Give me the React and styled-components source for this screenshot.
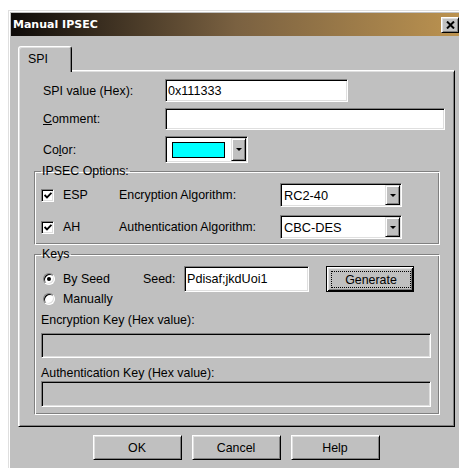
import styled, { createGlobalStyle } from "styled-components";

const GlobalStyle = createGlobalStyle`
  html, body {
    margin: 0;
    padding: 0;
    overflow: hidden;
    background: #fff;
  }
  body {
    font-family: "Liberation Sans", Arial, sans-serif;
    font-size: 12.4px;
    color: #000;
  }
  * {
    box-sizing: border-box;
  }
`;

const Desktop = styled.div`
  width: 459px;
  height: 468px;
  overflow: hidden;
  padding: 10px 0 0 8px;
`;

const Window = styled.div`
  width: 456px;
  height: 480px;
  background: #c0c0c0;
  border: 1px solid;
  border-color: #dfdfdf #000 #000 #dfdfdf;
  box-shadow: inset 1px 1px #fff, inset -1px -1px #808080;
  padding: 2px;
`;

const TitleBar = styled.div`
  height: 23px;
  display: flex;
  align-items: center;
  justify-content: space-between;
  padding: 0 2px;
  background: linear-gradient(90deg, #0e0b09 0%, #7a6141 50%, #bc9350 100%);
`;

const Title = styled.span`
  font-family: "DejaVu Sans", sans-serif;
  font-weight: bold;
  font-size: 11px;
  color: #fff;
`;

const CloseButton = styled.div`
  width: 18px;
  height: 16px;
  background: #c0c0c0;
  border: 1px solid;
  border-color: #fff #000 #000 #fff;
  box-shadow: inset 1px 1px #dfdfdf, inset -1px -1px #808080;
  display: flex;
  align-items: center;
  justify-content: center;
`;

const Body = styled.div`
  padding: 10px 0 0 7px;
`;

const TabStrip = styled.div`
  display: flex;
  height: 24px;
  position: relative;
  z-index: 1;
`;

const Tab = styled.div`
  width: 54px;
  height: 26px;
  padding: 5px 0 0 9px;
  line-height: 14px;
  background: #c0c0c0;
  border: 1px solid;
  border-bottom: none;
  border-color: #fff #000 transparent #fff;
  border-radius: 3px 3px 0 0;
  box-shadow: inset 1px 1px #dfdfdf, inset -1px 0 #808080;
`;

const Panel = styled.div`
  width: 437px;
  border: 1px solid;
  border-color: #fff #000 #000 #fff;
  box-shadow: inset 1px 1px #dfdfdf, inset -1px -1px #808080;
  padding: 8px 0 11px 15px;
`;

const FieldGrid = styled.div`
  display: grid;
  grid-template-columns: 122px auto;
  grid-template-rows: 23px 22px 27px;
  row-gap: 6px;
  align-items: center;
  justify-items: start;
  padding-left: 9px;
`;

const Label = styled.span`
  white-space: nowrap;
  line-height: 14px;
`;

const Sunken = styled.div`
  background: #fff;
  border: 1px solid;
  border-color: #808080 #fff #fff #808080;
  box-shadow: inset 1px 1px #000, inset -1px -1px #dfdfdf;
`;

const TextBox = styled(Sunken)`
  width: ${(p) => p.$w}px;
  height: ${(p) => p.$h}px;
  background: ${(p) => (p.$disabled ? "#c0c0c0" : "#fff")};
  padding: 0 3px 0 2px;
  display: flex;
  align-items: center;
  white-space: nowrap;
  overflow: hidden;
  font-size: 12.6px;
`;

const ColorCombo = styled(Sunken)`
  width: 83px;
  height: 27px;
  padding: 1px 1px 1px 6px;
  display: flex;
  align-items: center;
  justify-content: space-between;
`;

const Swatch = styled.div`
  width: 53px;
  height: 16px;
  background: ${(p) => p.$color};
  border: 1px solid #000;
`;

const DropButton = styled.div`
  width: 15px;
  align-self: stretch;
  background: #c0c0c0;
  border: 1px solid;
  border-color: #dfdfdf #000 #000 #dfdfdf;
  box-shadow: inset 1px 1px #fff, inset -1px -1px #808080;
  display: flex;
  align-items: center;
  justify-content: center;

  &::after {
    content: "";
    border-left: 3px solid transparent;
    border-right: 3px solid transparent;
    border-top: 3px solid #000;
  }
`;

const Combo = styled(Sunken)`
  width: 122px;
  height: 24px;
  padding: 1px;
  display: flex;
  align-items: stretch;
`;

const ComboText = styled.span`
  flex: 1;
  padding-left: 2px;
  display: flex;
  align-items: center;
  font-size: 12.8px;
`;

const Group = styled.fieldset`
  width: 406px;
  min-width: 0;
  margin: ${(p) => p.$mt}px 0 0;
  padding: 5px 8px ${(p) => p.$pb}px 6px;
  border: 1px solid;
  border-color: #808080 #fff #fff #808080;
  box-shadow: inset 1px 1px #fff, inset -1px -1px #808080;
`;

const Legend = styled.legend`
  padding: 0 1px;
  line-height: 13px;
`;

const OptionGrid = styled.div`
  display: grid;
  grid-template-columns: 78px 161px 122px;
  grid-auto-rows: 24px;
  row-gap: 8px;
  align-items: center;
`;

const CheckLabel = styled.label`
  display: flex;
  align-items: center;
  gap: ${(p) => p.$gap || 9}px;
  margin-left: ${(p) => p.$ml || 0}px;
  line-height: 14px;
`;

const CheckBox = styled(Sunken)`
  width: 13px;
  height: 13px;
  display: flex;
  align-items: center;
  justify-content: center;
`;

const RadioDot = styled(Sunken)`
  width: 12px;
  height: 12px;
  border-radius: 50%;
  display: flex;
  align-items: center;
  justify-content: center;

  &::after {
    content: "";
    width: 4px;
    height: 4px;
    border-radius: 50%;
    background: ${(p) => (p.$checked ? "#000" : "transparent")};
  }
`;

const SeedRow = styled.div`
  display: grid;
  grid-template-columns: 102px 41px 142px 88px;
  height: 26px;
  align-items: center;
`;

const RadioRow = styled.div`
  height: 14px;
  display: flex;
  align-items: center;
`;

const KeyLabel = styled(Label)`
  display: block;
  margin-top: ${(p) => p.$mt}px;
`;

const KeyField = styled(TextBox)`
  margin-top: ${(p) => p.$mt}px;
`;

const PushButton = styled.button`
  width: ${(p) => p.$w || 89}px;
  height: ${(p) => p.$h || 25}px;
  padding: 0;
  font: inherit;
  color: #000;
  background: #c0c0c0;
  border: 1px solid;
  border-color: #fff #000 #000 #fff;
  box-shadow: inset 1px 1px #dfdfdf, inset -1px -1px #808080;
`;

const DefaultButton = styled(PushButton)`
  display: flex;
  padding: 4px 2px 3px 4px;
  border: 1px solid #000;
  box-shadow: inset 1px 1px #fff, inset -1px -1px #000, inset 2px 2px #dfdfdf,
    inset -2px -2px #808080;
`;

const FocusRing = styled.span`
  flex: 1;
  border: 1px dotted #000;
  display: flex;
  align-items: center;
  justify-content: center;
`;

const ButtonRow = styled.div`
  display: flex;
  justify-content: center;
  gap: 10px;
  margin-top: 8px;
`;

function CheckMark() {
  return (
    <svg width="8" height="7" viewBox="0 0 8 7">
      <path d="M0.6 3 L3 5.4 L7.4 0.8" fill="none" stroke="#000" strokeWidth="1.8" />
    </svg>
  );
}

function CloseGlyph() {
  return (
    <svg width="9" height="8" viewBox="0 0 9 8">
      <path d="M1 0.5 L8 7.5 M8 0.5 L1 7.5" stroke="#000" strokeWidth="2" />
    </svg>
  );
}

export default function App() {
  return (
    <>
      <GlobalStyle />
      <Desktop>
        <Window>
          <TitleBar>
            <Title>Manual IPSEC</Title>
            <CloseButton>
              <CloseGlyph />
            </CloseButton>
          </TitleBar>

          <Body>
            <TabStrip>
              <Tab>SPI</Tab>
            </TabStrip>

            <Panel>
              <FieldGrid>
                <Label>SPI value (Hex):</Label>
                <TextBox $w={183} $h={23}>0x111333</TextBox>

                <Label>
                  <u>C</u>omment:
                </Label>
                <TextBox $w={280} $h={22} />

                <Label>
                  Co<u>l</u>or:
                </Label>
                <ColorCombo>
                  <Swatch $color="#00ffff" />
                  <DropButton />
                </ColorCombo>
              </FieldGrid>

              <Group $mt={2} $pb={5}>
                <Legend>IPSEC Options:</Legend>
                <OptionGrid>
                  <CheckLabel>
                    <CheckBox>
                      <CheckMark />
                    </CheckBox>
                    ESP
                  </CheckLabel>
                  <Label>Encryption Algorithm:</Label>
                  <Combo>
                    <ComboText>RC2-40</ComboText>
                    <DropButton />
                  </Combo>

                  <CheckLabel>
                    <CheckBox>
                      <CheckMark />
                    </CheckBox>
                    AH
                  </CheckLabel>
                  <Label>Authentication Algorithm:</Label>
                  <Combo>
                    <ComboText>CBC-DES</ComboText>
                    <DropButton />
                  </Combo>
                </OptionGrid>
              </Group>

              <Group $mt={3} $pb={7}>
                <Legend>Keys</Legend>
                <SeedRow>
                  <CheckLabel $gap={8} $ml={2}>
                    <RadioDot $checked />
                    By Seed
                  </CheckLabel>
                  <Label>Seed:</Label>
                  <TextBox $w={125} $h={26}>Pdisaf;jkdUoi1</TextBox>
                  <DefaultButton $w={88} $h={26}>
                    <FocusRing>Generate</FocusRing>
                  </DefaultButton>
                </SeedRow>
                <RadioRow>
                  <CheckLabel $gap={8} $ml={2}>
                    <RadioDot />
                    Manually
                  </CheckLabel>
                </RadioRow>
                <KeyLabel $mt={7}>Encryption Key (Hex value):</KeyLabel>
                <KeyField $mt={6} $w={390} $h={25} $disabled />
                <KeyLabel $mt={8}>Authentication Key (Hex value):</KeyLabel>
                <KeyField $mt={1} $w={390} $h={26} $disabled />
              </Group>
            </Panel>
          </Body>

          <ButtonRow>
            <PushButton>OK</PushButton>
            <PushButton>Cancel</PushButton>
            <PushButton>Help</PushButton>
          </ButtonRow>
        </Window>
      </Desktop>
    </>
  );
}
